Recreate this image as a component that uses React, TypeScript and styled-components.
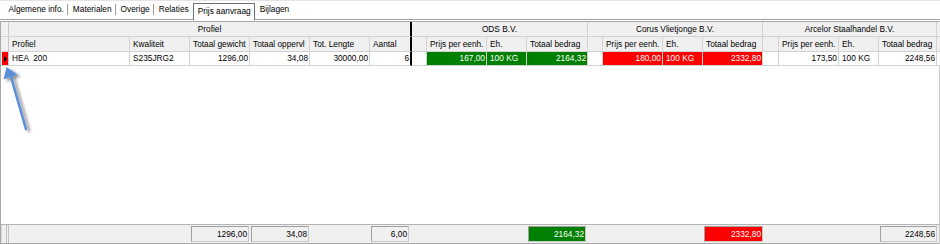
import React from 'react';
import styled, { createGlobalStyle } from 'styled-components';

const Global = createGlobalStyle`
  html, body { margin: 0; padding: 0; background: #fff; }
  body {
    font-family: "Liberation Sans", Arial, sans-serif;
    font-size: 8.3px;
    color: #000;
  }
  * { box-sizing: border-box; }
`;

const COLS =
  '8px 121px 60px 60px 60px 60px 42px 15px 60px 40px 61px 15px 60px 40px 60px 16px 60px 40px 58px 1fr';

const Page = styled.div`
  position: relative;
  width: 940px;
  height: 244px;
  display: flex;
  flex-direction: column;
  overflow: hidden;
`;

const TabStrip = styled.div`
  height: 20px;
  display: flex;
  align-items: flex-end;
  padding-left: 4px;
  border-top: 1px solid #e4e4e4;
  border-bottom: 1px solid #a0a0a0;
`;

const Tab = styled.div<{ $active?: boolean; $sep?: boolean }>`
  position: relative;
  height: ${(p) => (p.$active ? '17px' : '14px')};
  line-height: ${(p) => (p.$active ? '15px' : '13px')};
  padding: 0 ${(p) => (p.$active ? '3.5px' : '4.5px')};
  margin-bottom: ${(p) => (p.$active ? '-1px' : '2px')};
  white-space: nowrap;
  background: #fff;
  border: ${(p) => (p.$active ? '1px solid #6e6e6e' : 'none')};
  border-bottom: none;
  &::after {
    content: '';
    display: ${(p) => (p.$sep ? 'block' : 'none')};
    position: absolute;
    right: 0;
    top: 1px;
    width: 1px;
    height: 11px;
    background: #9a9a9a;
  }
`;

const Grid = styled.div`
  flex: 1;
  display: flex;
  flex-direction: column;
  margin-top: 1px;
  border-top: 1px solid #a8a8a8;
  border-left: 1px solid #a8a8a8;
  border-right: 1px solid #c8c8c8;
`;

const Row = styled.div<{ $h: number }>`
  display: grid;
  grid-template-columns: ${COLS};
  height: ${(p) => p.$h}px;
`;

const HeadCell = styled.div<{ $span?: number; $center?: boolean; $thick?: boolean }>`
  grid-column: span ${(p) => p.$span ?? 1};
  background: #f0f0f0;
  border-right: ${(p) => (p.$thick ? '2px solid #000' : '1px solid #d2d2d2')};
  border-bottom: 1px solid #d2d2d2;
  text-align: ${(p) => (p.$center ? 'center' : 'left')};
  padding: 0 3px;
  line-height: 14px;
  white-space: nowrap;
  overflow: hidden;
`;

const Cell = styled.div<{ $align?: 'left' | 'right'; $tone?: 'green' | 'red'; $thick?: boolean }>`
  background: ${(p) => (p.$tone === 'green' ? '#008000' : p.$tone === 'red' ? '#ff0000' : '#fff')};
  color: ${(p) => (p.$tone ? '#fff' : '#000')};
  border-right: ${(p) => (p.$thick ? '2px solid #000' : '1px solid #d2d2d2')};
  border-bottom: 1px solid #d2d2d2;
  text-align: ${(p) => p.$align ?? 'left'};
  padding: 0 ${(p) => (p.$align === 'right' ? '1px' : '3px')};
  line-height: 13px;
  white-space: pre;
  overflow: hidden;
`;

const Indicator = styled.div`
  background: #f0f0f0;
  border-right: 1px solid #c8c8c8;
  border-bottom: 1px solid #d2d2d2;
  display: flex;
  align-items: stretch;
  padding: 0 0 0 1px;
`;

const Marker = styled.div`
  flex: 1;
  background: #ff0000;
  display: flex;
  align-items: center;
  justify-content: center;
  &::before {
    content: '';
    width: 0;
    height: 0;
    border-left: 3px solid #000;
    border-top: 3px solid transparent;
    border-bottom: 3px solid transparent;
  }
`;

const Body = styled.div`
  flex: 1;
  background: #fff;
`;

const Footer = styled.div`
  display: grid;
  grid-template-columns: ${COLS};
  height: 20px;
  border-top: 1px solid #b4b4b4;
  border-bottom: 1px solid #a8a8a8;
  background: #f0f0f0;
  padding: 1px 0;
`;

const FootIndicator = styled.div`
  margin: -1px 0;
  border-left: 1px solid #d8d8d8;
  border-right: 3px double #c4c4c4;
`;

const FootCell = styled.div<{ $tone?: 'green' | 'red' | 'plain'; $gap?: number }>`
  margin-right: ${(p) => p.$gap ?? 1}px;
  margin-left: 1px;
  height: 16px;
  line-height: 14px;
  text-align: right;
  padding-right: 1px;
  white-space: nowrap;
  background: ${(p) => (p.$tone === 'green' ? '#008000' : p.$tone === 'red' ? '#ff0000' : '#f0f0f0')};
  color: ${(p) => (p.$tone === 'green' || p.$tone === 'red' ? '#fff' : '#000')};
  border: ${(p) => (p.$tone ? '1px solid #c8c8c8' : 'none')};
  border-top-color: ${(p) => (p.$tone ? '#a0a0a0' : 'transparent')};
  border-left-color: ${(p) => (p.$tone ? '#a0a0a0' : 'transparent')};
`;

const ArrowLayer = styled.svg`
  position: absolute;
  left: 0;
  top: 60px;
  width: 40px;
  height: 80px;
  pointer-events: none;
  overflow: visible;
`;

type Supplier = {
  name: string;
  price: string;
  unit: string;
  total: string;
  tone?: 'green' | 'red';
};

const suppliers: Supplier[] = [
  { name: 'ODS B.V.', price: '167,00', unit: '100 KG', total: '2164,32', tone: 'green' },
  { name: 'Corus Vlietjonge B.V.', price: '180,00', unit: '100 KG', total: '2332,80', tone: 'red' },
  { name: 'Arcelor Staalhandel B.V.', price: '173,50', unit: '100 KG', total: '2248,56' },
];

const tabs = ['Algemene info.', 'Materialen', 'Overige', 'Relaties', 'Prijs aanvraag', 'Bijlagen'];
const activeTab = 4;

export default function App() {
  return (
    <Page>
      <Global />
      <TabStrip>
        {tabs.map((t, i) => (
          <Tab key={t} $active={i === activeTab} $sep={i < activeTab - 1}>
            {t}
          </Tab>
        ))}
      </TabStrip>
      <Grid>
        <Row $h={15}>
          <Indicator />
          <HeadCell $span={6} $center $thick>
            Profiel
          </HeadCell>
          {suppliers.map((s) => (
            <HeadCell key={s.name} $span={4} $center>
              {s.name}
            </HeadCell>
          ))}
          <HeadCell />
        </Row>
        <Row $h={15}>
          <Indicator />
          <HeadCell>Profiel</HeadCell>
          <HeadCell>Kwaliteit</HeadCell>
          <HeadCell>Totaal gewicht</HeadCell>
          <HeadCell>Totaal oppervl</HeadCell>
          <HeadCell>Tot. Lengte</HeadCell>
          <HeadCell $thick>Aantal</HeadCell>
          {suppliers.map((s) => (
            <React.Fragment key={s.name}>
              <HeadCell />
              <HeadCell>Prijs per eenh.</HeadCell>
              <HeadCell>Eh.</HeadCell>
              <HeadCell>Totaal bedrag</HeadCell>
            </React.Fragment>
          ))}
          <HeadCell />
        </Row>
        <Row $h={14}>
          <Indicator>
            <Marker />
          </Indicator>
          <Cell>HEA  200</Cell>
          <Cell>S235JRG2</Cell>
          <Cell $align="right">1296,00</Cell>
          <Cell $align="right">34,08</Cell>
          <Cell $align="right">30000,00</Cell>
          <Cell $align="right" $thick>
            6
          </Cell>
          {suppliers.map((s) => (
            <React.Fragment key={s.name}>
              <Cell />
              <Cell $align="right" $tone={s.tone}>
                {s.price}
              </Cell>
              <Cell $tone={s.tone}>{s.unit}</Cell>
              <Cell $align="right" $tone={s.tone}>
                {s.total}
              </Cell>
            </React.Fragment>
          ))}
          <Cell />
        </Row>
        <Body />
        <Footer>
          <FootIndicator />
          <div />
          <div />
          <FootCell $tone="plain">1296,00</FootCell>
          <FootCell $tone="plain">34,08</FootCell>
          <div />
          <FootCell $tone="plain" $gap={3}>
            6,00
          </FootCell>
          <div />
          <div />
          <div />
          <FootCell $tone="green" $gap={2}>
            2164,32
          </FootCell>
          <div />
          <div />
          <div />
          <FootCell $tone="red" $gap={0}>
            2332,80
          </FootCell>
          <div />
          <div />
          <div />
          <FootCell $tone="plain" $gap={0}>
            2248,56
          </FootCell>
          <div />
        </Footer>
      </Grid>
      <ArrowLayer viewBox="0 60 40 80">
        <defs>
          <filter id="sh" x="-50%" y="-50%" width="200%" height="200%">
            <feGaussianBlur in="SourceAlpha" stdDeviation="1.6" />
            <feOffset dx="3" dy="2" result="b" />
            <feComponentTransfer>
              <feFuncA type="linear" slope="0.45" />
            </feComponentTransfer>
            <feMerge>
              <feMergeNode />
              <feMergeNode in="SourceGraphic" />
            </feMerge>
          </filter>
        </defs>
        <g filter="url(#sh)">
          <line x1="26" y1="129" x2="11" y2="77" stroke="#5b8fd9" strokeWidth="2.6" strokeLinecap="round" />
          <polygon points="6.5,67 3.5,79.5 17.5,74.5" fill="#5b8fd9" />
        </g>
      </ArrowLayer>
    </Page>
  );
}
